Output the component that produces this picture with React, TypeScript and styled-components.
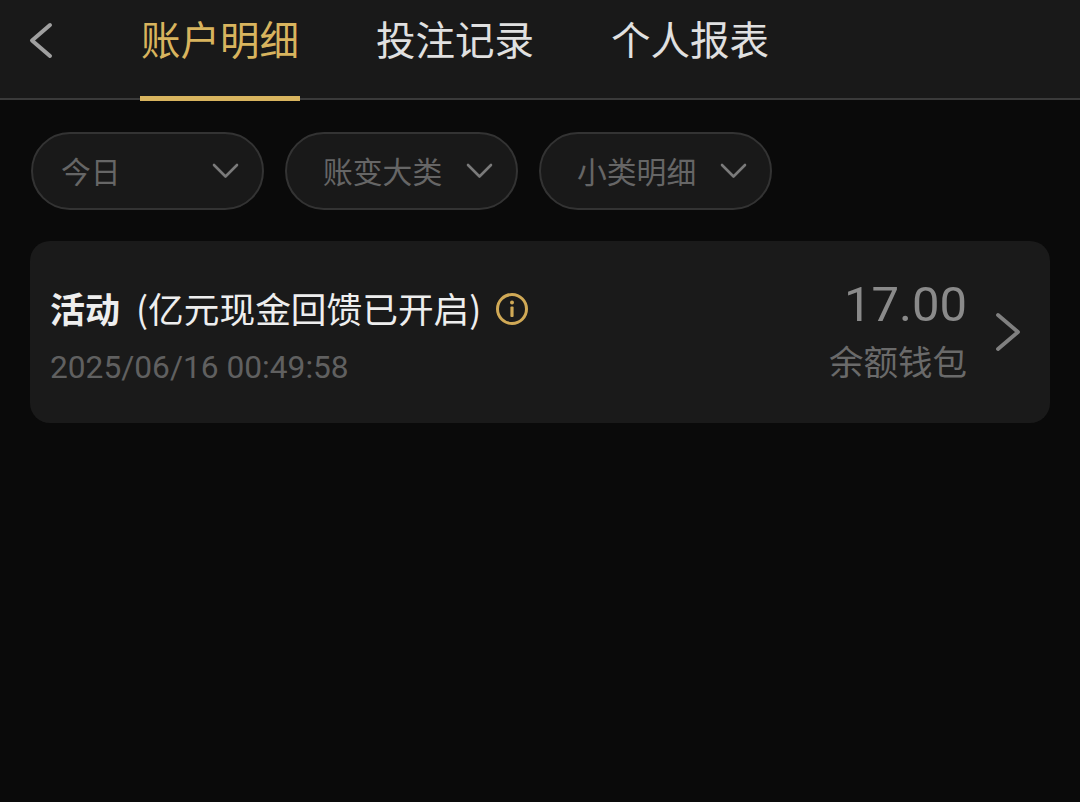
import * as React from "react"
import styled, { createGlobalStyle } from "styled-components"

const GlobalStyle = createGlobalStyle`
  html, body {
    margin: 0;
    padding: 0;
    background: #0a0a0a;
  }
  body {
    font-family: "Noto Sans CJK SC", "Roboto", sans-serif;
  }
  * {
    box-sizing: border-box;
  }
`

const Page = styled.div`
  width: 1080px;
  height: 802px;
  background: #0a0a0a;
  overflow: hidden;
`

const Header = styled.div`
  display: flex;
  height: 100px;
  background: #191919;
  border-bottom: 2px solid #3a3a3a;
`

const BackButton = styled.div`
  width: 140px;
  padding: 20px 0 0 29px;
  line-height: 0;
`

const Tabs = styled.div`
  display: flex;
  gap: 75px;
`

const Tab = styled.div<{ $active?: boolean }>`
  position: relative;
  width: 160px;
  height: 98px;
  padding-top: 9px;
  font-size: 39.5px;
  line-height: 58px;
  text-align: center;
  white-space: nowrap;
  color: ${(p) => (p.$active ? "#d8b45e" : "#e0e0e0")};

  &::after {
    content: "";
    display: ${(p) => (p.$active ? "block" : "none")};
    position: absolute;
    left: 0;
    right: 0;
    bottom: -3px;
    height: 5px;
    background: #d8b45e;
  }
`

const Filters = styled.div`
  display: flex;
  gap: 21px;
  padding: 32px 0 0 31px;
`

const Filter = styled.div<{ $wide?: boolean }>`
  display: flex;
  align-items: center;
  justify-content: space-between;
  width: 233px;
  height: 78px;
  padding: 0 23px 2px ${(p) => (p.$wide ? "36px" : "28px")};
  background: #191919;
  border: 2px solid #333333;
  border-radius: 39px;
  font-size: 29.8px;
  color: #666666;
`

const Card = styled.div`
  display: flex;
  justify-content: space-between;
  width: 1020px;
  height: 182px;
  margin: 31px 0 0 30px;
  padding: 0 16px 0 20px;
  background: #1a1a1a;
  border-radius: 20px;
`

const Info = styled.div`
  padding-top: 40px;
`

const TitleRow = styled.div`
  display: flex;
  align-items: center;
  height: 52px;
  color: #eeeeee;
  white-space: nowrap;
`

const Title = styled.span`
  font-size: 35px;
  font-weight: 700;
  margin-right: 16px;
`

const Note = styled.span`
  font-size: 35.7px;
  margin-right: 14px;
`

const InfoIcon = styled.svg`
  width: 34px;
  height: 34px;
  margin-top: 4px;
  display: block;
`

const Time = styled.div`
  margin-top: 13px;
  font-family: "Roboto", sans-serif;
  font-size: 31.7px;
  line-height: 44px;
  color: #606060;
`

const Side = styled.div`
  display: flex;
  align-items: center;
  gap: 27px;
`

const AmountBox = styled.div`
  padding-bottom: 2px;
  text-align: right;
`

const Amount = styled.div`
  font-family: "Roboto", sans-serif;
  font-size: 49px;
  line-height: 56px;
  color: #8a8a8a;
`

const Wallet = styled.div`
  margin-top: 2px;
  font-size: 34.5px;
  line-height: 50px;
  color: #6a6a6a;
`

const Chevron = ({ points, color, size, width }: { points: string; color: string; size: number; width: number }) => (
  <svg width={size} height={size} viewBox={`0 0 ${size} ${size}`} fill="none">
    <polyline points={points} stroke={color} strokeWidth={width} strokeLinecap="round" strokeLinejoin="round" />
  </svg>
)

const FilterItem = ({ label, wide }: { label: string; wide?: boolean }) => (
  <Filter $wide={wide}>
    <span>{label}</span>
    <Chevron points="2,8 13.5,19.5 25,8" color="#7a7a7a" size={27} width={2.6} />
  </Filter>
)

export default function App() {
  return (
    <Page>
      <GlobalStyle />
      <Header>
        <BackButton>
          <Chevron points="21,5 3,20.5 21,36" color="#a0a0a0" size={40} width={4} />
        </BackButton>
        <Tabs>
          <Tab $active>账户明细</Tab>
          <Tab>投注记录</Tab>
          <Tab>个人报表</Tab>
        </Tabs>
      </Header>
      <Filters>
        <FilterItem label="今日" />
        <FilterItem label="账变大类" wide />
        <FilterItem label="小类明细" wide />
      </Filters>
      <Card>
        <Info>
          <TitleRow>
            <Title>活动</Title>
            <Note>(亿元现金回馈已开启)</Note>
            <InfoIcon viewBox="0 0 34 34" fill="none">
              <circle cx="17" cy="17" r="14.5" stroke="#d0a956" strokeWidth="3" />
              <circle cx="17" cy="10.5" r="2" fill="#d0a956" />
              <rect x="15.4" y="14.5" width="3.2" height="10.5" rx="1" fill="#d0a956" />
            </InfoIcon>
          </TitleRow>
          <Time>2025/06/16 00:49:58</Time>
        </Info>
        <Side>
          <AmountBox>
            <Amount>17.00</Amount>
            <Wallet>余额钱包</Wallet>
          </AmountBox>
          <Chevron points="4,3 24,20 4,37" color="#808080" size={40} width={3.8} />
        </Side>
      </Card>
    </Page>
  )
}
